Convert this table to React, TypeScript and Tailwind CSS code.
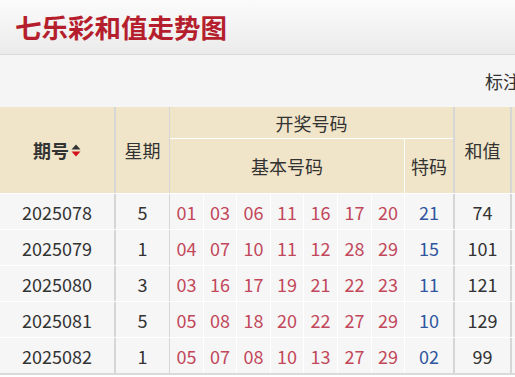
const rows = [
  { issue: "2025078", week: "5", nums: ["01", "03", "06", "11", "16", "17", "20"], sp: "21", sum: "74" },
  { issue: "2025079", week: "1", nums: ["04", "07", "10", "11", "12", "28", "29"], sp: "15", sum: "101" },
  { issue: "2025080", week: "3", nums: ["03", "16", "17", "19", "21", "22", "23"], sp: "11", sum: "121" },
  { issue: "2025081", week: "5", nums: ["05", "08", "18", "20", "22", "27", "29"], sp: "10", sum: "129" },
  { issue: "2025082", week: "1", nums: ["05", "07", "08", "10", "13", "27", "29"], sp: "02", sum: "99" },
];

const numWidths = ["w-[34px]", "w-[33px]", "w-[34px]", "w-[33px]", "w-[34px]", "w-[34px]", "w-[33px]"];

function SortIcon() {
  return (
    <svg width="10" height="13" viewBox="0 0 10 13" className="ml-[2px]">
      <path d="M5 0.5 L9.5 5.5 H0.5 Z" fill="#333" />
      <path d="M5 12.5 L9.5 7.5 H0.5 Z" fill="#d0131c" />
    </svg>
  );
}

export default function App() {
  return (
    <div
      className="w-[515px] h-[377px] overflow-hidden bg-[#f5f5f5] text-[#333]"
      style={{ fontFamily: '"Noto Sans CJK SC", "Microsoft YaHei", sans-serif' }}
    >
      <div className="h-[55px] flex items-center pl-[15px] bg-gradient-to-b from-[#fbfbfb] to-[#ebebeb] border-b border-[#d9d9d9]">
        <h1 className="text-[26.5px] font-bold leading-none text-[#b51f2d]">七乐彩和值走势图</h1>
      </div>

      <div className="h-[52px] flex items-center pl-[485px] whitespace-nowrap">
        <span className="text-[18px] leading-none">标注说明</span>
      </div>

      <div className="w-[600px]">
        <div className="flex h-[86px] bg-[#f0e5c8] text-[18px] leading-none">
          <div className="w-[116px] flex items-center justify-center border-r-2 border-[#d6d6d6] font-bold">
            期号
            <SortIcon />
          </div>
          <div className="w-[54px] flex items-center justify-center border-r border-[#d6d6d6]">星期</div>
          <div className="w-[285px] flex flex-col border-r-2 border-[#d6d6d6]">
            <div className="h-[32px] flex items-center justify-center border-b border-white">开奖号码</div>
            <div className="flex-1 flex">
              <div className="w-[235px] flex items-center justify-center border-r border-white">基本号码</div>
              <div className="flex-1 flex items-center justify-center">特码</div>
            </div>
          </div>
          <div className="w-[57px] flex items-center justify-center border-r-2 border-[#d6d6d6]">和值</div>
          <div className="flex-1" />
        </div>

        {rows.map((r) => (
          <div key={r.issue} className="flex h-[36px] bg-[#f6f6f6] border-t border-white text-[18px] leading-none">
            <div className="w-[116px] flex items-center justify-center border-r-2 border-[#d6d6d6]">{r.issue}</div>
            <div className="w-[54px] flex items-center justify-center border-r border-[#d6d6d6]">{r.week}</div>
            {r.nums.map((n, i) => (
              <div key={i} className={`${numWidths[i]} flex items-center justify-center border-r border-white text-[#c2475a]`}>
                {n}
              </div>
            ))}
            <div className="w-[50px] flex items-center justify-center border-r-2 border-[#d6d6d6] text-[#30569f]">{r.sp}</div>
            <div className="w-[57px] flex items-center justify-center border-r-2 border-[#d6d6d6]">{r.sum}</div>
            <div className="flex-1" />
          </div>
        ))}
        <div className="h-[2px] bg-[#dadada]" />
        <div className="h-[4px] bg-white" />
      </div>
    </div>
  );
}
